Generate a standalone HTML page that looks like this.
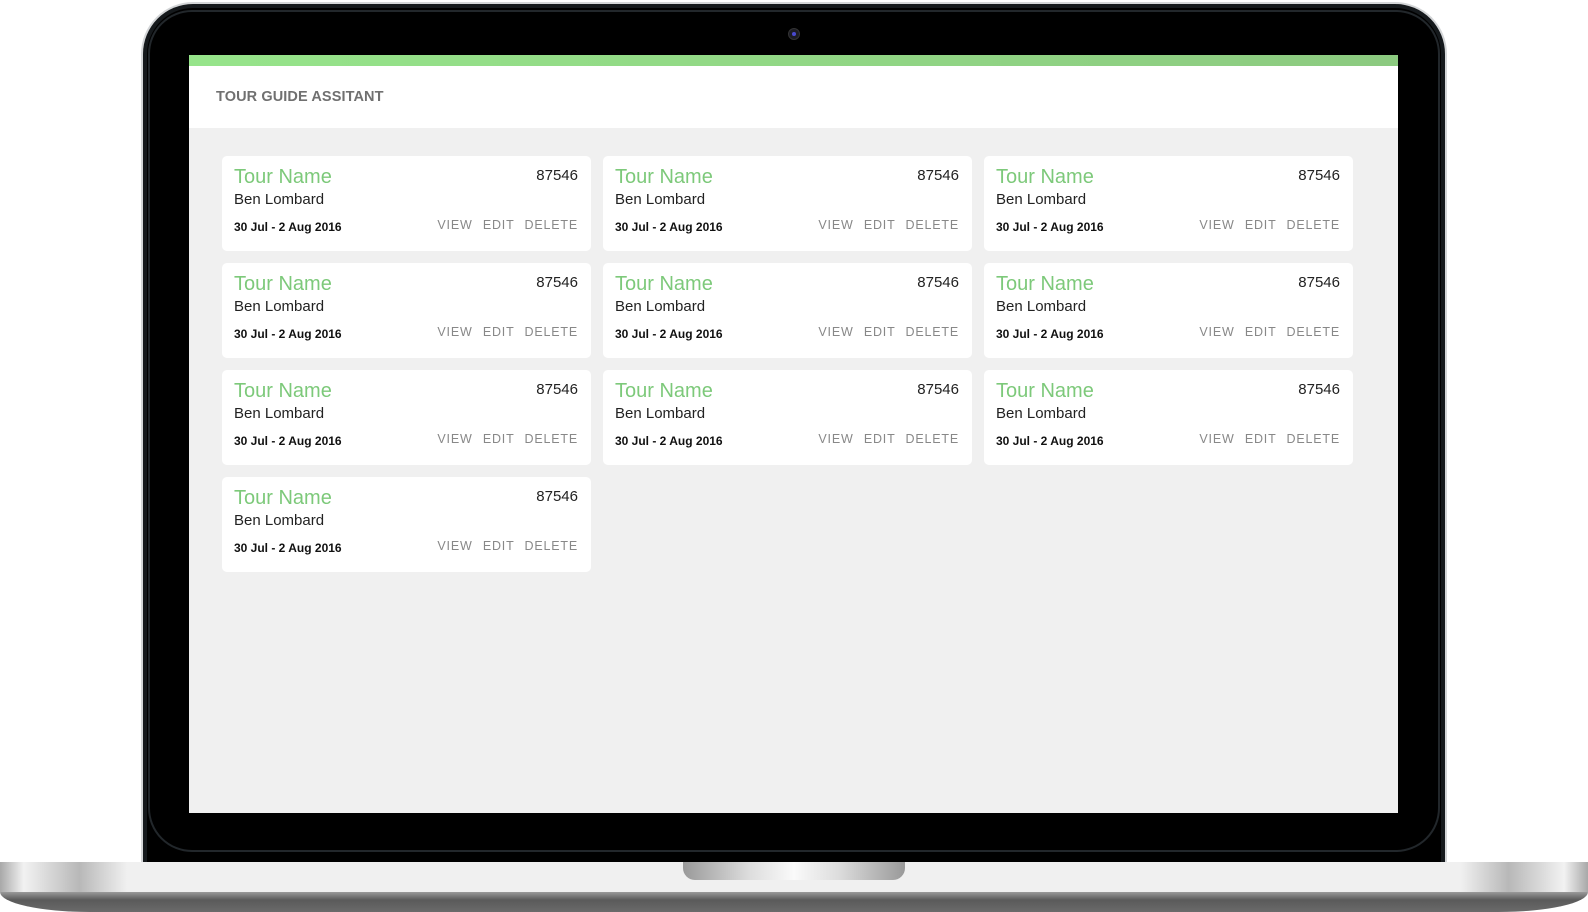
<!DOCTYPE html>
<html><head><style>
*{margin:0;padding:0;box-sizing:border-box}
body{width:1588px;height:912px;background:#fff;position:relative;overflow:hidden;font-family:"Liberation Sans",sans-serif}
.bezel{position:absolute;left:141px;top:2px;width:1306px;height:870px;background:#000;border-radius:52px 52px 0 0;border:2px solid #d4d6d8;border-bottom:none;box-shadow:inset 0 0 0 4px #15191c}
.inner{position:absolute;left:148px;top:10px;width:1292px;height:842px;border:2px solid #22272b;border-radius:44px;}
.cam{position:absolute;left:788px;top:28px;width:12px;height:12px;border-radius:50%;background:#1c1c24;border:1px solid #333}
.cam:after{content:"";position:absolute;left:3px;top:3px;width:4px;height:4px;border-radius:50%;background:#4a4ad0}
.screen{position:absolute;left:189px;top:55px;width:1209px;height:758px;background:#f0f0f0;overflow:hidden}
.bar{height:11px;background:linear-gradient(90deg,#96e48a,#8cca80)}
.hdr{height:62px;background:#fff;padding:23px 0 0 27px;font-size:14.5px;font-weight:bold;color:#707070;letter-spacing:.1px}
.card{position:absolute;width:369px;height:95px;background:#fff;border-radius:5px}
.t{position:absolute;left:12px;top:10px;font-size:20px;color:#7dc97a}
.n{position:absolute;right:13px;top:11px;font-size:15px;color:#222}
.b{position:absolute;left:12px;top:35px;font-size:15px;color:#222}
.d{position:absolute;left:12px;top:64px;font-size:12px;font-weight:bold;color:#111}
.a{position:absolute;right:13px;top:62px;font-size:12.5px;color:#888;letter-spacing:.8px;word-spacing:6px}
.base{position:absolute;left:0;top:862px;width:1588px;height:30px;background:linear-gradient(90deg,#a8a8a8 0,#f2f2f2 1.5%,#b8b8b8 5%,#f0f0f0 8%,#f0f0f0 92%,#b8b8b8 95%,#f2f2f2 98.5%,#a8a8a8 100%)}
.low{position:absolute;left:0;top:892px;width:1588px;height:20px;background:linear-gradient(#9a9a9a,#5a5a5a 40%,#6a6a6a);border-radius:0 0 90px 90px/0 0 20px 20px}
.notch{position:absolute;left:683px;top:862px;width:222px;height:18px;border-radius:0 0 12px 12px;background:linear-gradient(90deg,#999,#ddd 30%,#fafafa 50%,#ddd 70%,#999)}
</style></head><body>
<div class="bezel"></div>
<div class="inner"></div>
<div class="cam"></div>
<div class="screen">
<div class="bar"></div>
<div class="hdr">TOUR GUIDE ASSITANT</div>
</div>
<div class="base"></div>
<div class="notch"></div>
<div class="low"></div>
<div style="position:absolute;left:0;top:0">
<div class="card" style="left:222px;top:156px"><div class="t">Tour Name</div><div class="n">87546</div><div class="b">Ben Lombard</div><div class="d">30 Jul - 2 Aug 2016</div><div class="a">VIEW EDIT DELETE</div></div>
<div class="card" style="left:603px;top:156px"><div class="t">Tour Name</div><div class="n">87546</div><div class="b">Ben Lombard</div><div class="d">30 Jul - 2 Aug 2016</div><div class="a">VIEW EDIT DELETE</div></div>
<div class="card" style="left:984px;top:156px"><div class="t">Tour Name</div><div class="n">87546</div><div class="b">Ben Lombard</div><div class="d">30 Jul - 2 Aug 2016</div><div class="a">VIEW EDIT DELETE</div></div>
<div class="card" style="left:222px;top:263px"><div class="t">Tour Name</div><div class="n">87546</div><div class="b">Ben Lombard</div><div class="d">30 Jul - 2 Aug 2016</div><div class="a">VIEW EDIT DELETE</div></div>
<div class="card" style="left:603px;top:263px"><div class="t">Tour Name</div><div class="n">87546</div><div class="b">Ben Lombard</div><div class="d">30 Jul - 2 Aug 2016</div><div class="a">VIEW EDIT DELETE</div></div>
<div class="card" style="left:984px;top:263px"><div class="t">Tour Name</div><div class="n">87546</div><div class="b">Ben Lombard</div><div class="d">30 Jul - 2 Aug 2016</div><div class="a">VIEW EDIT DELETE</div></div>
<div class="card" style="left:222px;top:370px"><div class="t">Tour Name</div><div class="n">87546</div><div class="b">Ben Lombard</div><div class="d">30 Jul - 2 Aug 2016</div><div class="a">VIEW EDIT DELETE</div></div>
<div class="card" style="left:603px;top:370px"><div class="t">Tour Name</div><div class="n">87546</div><div class="b">Ben Lombard</div><div class="d">30 Jul - 2 Aug 2016</div><div class="a">VIEW EDIT DELETE</div></div>
<div class="card" style="left:984px;top:370px"><div class="t">Tour Name</div><div class="n">87546</div><div class="b">Ben Lombard</div><div class="d">30 Jul - 2 Aug 2016</div><div class="a">VIEW EDIT DELETE</div></div>
<div class="card" style="left:222px;top:477px"><div class="t">Tour Name</div><div class="n">87546</div><div class="b">Ben Lombard</div><div class="d">30 Jul - 2 Aug 2016</div><div class="a">VIEW EDIT DELETE</div></div>
</div>
</body></html>
